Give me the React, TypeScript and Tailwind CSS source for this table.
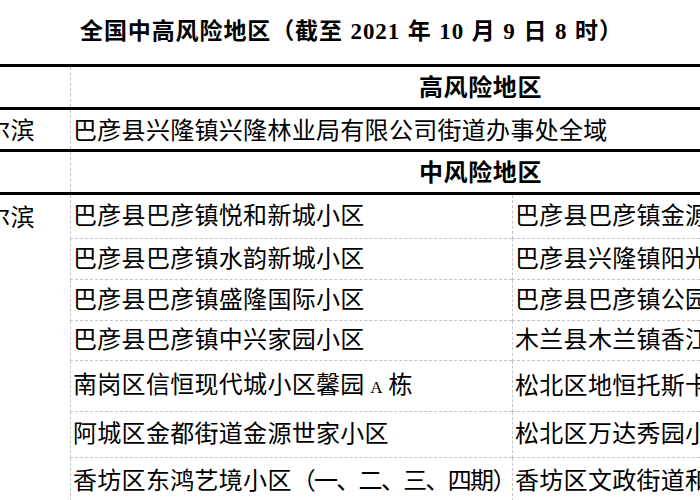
const cjk = "font-['Noto_Sans_CJK_SC',sans-serif]";

const rows = [
  { b: "巴彦县巴彦镇悦和新城小区", c: "巴彦县巴彦镇金源小区", h: "h-[44px]" },
  { b: "巴彦县巴彦镇水韵新城小区", c: "巴彦县兴隆镇阳光小区", h: "h-[41px]" },
  { b: "巴彦县巴彦镇盛隆国际小区", c: "巴彦县巴彦镇公园小区", h: "h-[41px]" },
  { b: "巴彦县巴彦镇中兴家园小区", c: "木兰县木兰镇香江小区", h: "h-[40px]" },
  { b: "南岗区信恒现代城小区馨园", tail: "栋", c: "松北区地恒托斯卡纳小区", h: "h-[51px]" },
  { b: "阿城区金都街道金源世家小区", c: "松北区万达秀园小区", h: "h-[46px]" },
  { b: "香坊区东鸿艺境小区", paren: "（一、二、三、四期）", c: "香坊区文政街道和平小区", h: "h-[48px]" },
];

export default function App() {
  return (
    <div className={`w-[700px] h-[500px] overflow-hidden bg-white text-black ${cjk}`}>
      <div className="ml-[-41px] w-[931px]">
        {/* title */}
        <div className="h-[64px] flex items-center pl-[121px] pb-[2px]">
          <h1 className="font-['Liberation_Serif','Noto_Sans_CJK_SC',serif] font-bold text-[23px] leading-none whitespace-nowrap tracking-[0.9px] [word-spacing:1px]">
            全国中高风险地区（截至 2021 年 10 月 9 日 8 时）
          </h1>
        </div>

        {/* high risk header */}
        <div className="border-t-[3px] border-black grid grid-cols-[111px_820px] h-[43px]">
          <div />
          <div className="border-l border-dashed border-[#c4c4c4] flex items-center justify-center pb-[2px]">
            <span className="font-bold text-[24px] leading-none tracking-[0.6px]">高风险地区</span>
          </div>
        </div>

        <div className="border-t-[3px] border-black grid grid-cols-[111px_820px] h-[42px] text-[24px] leading-none tracking-[0.3px]">
          <div className="flex items-center pl-[3px] pb-[2px]">哈尔滨</div>
          <div className="border-l border-dashed border-[#c4c4c4] flex items-center pl-[2px] pb-[2px] whitespace-nowrap">
            巴彦县兴隆镇兴隆林业局有限公司街道办事处全域
          </div>
        </div>

        {/* medium risk header */}
        <div className="border-t-[3px] border-black grid grid-cols-[111px_820px] h-[43px]">
          <div />
          <div className="border-l border-dashed border-[#c4c4c4] flex items-center justify-center pb-[2px]">
            <span className="font-bold text-[24px] leading-none tracking-[0.6px]">中风险地区</span>
          </div>
        </div>

        <div className="border-t-[3px] border-black flex text-[24px] leading-none tracking-[0.3px]">
          <div className="w-[111px] shrink-0 pl-[3px] pt-[9px]">哈尔滨</div>
          <div className="flex-1">
            {rows.map((r, i) => (
              <div key={i} className={`grid grid-cols-[442px_378px] ${r.h}`}>
                <div className="border-l border-b border-dashed border-[#c4c4c4] flex items-center pl-[2px] pb-[5px] whitespace-nowrap overflow-hidden">
                  <span>
                    {r.b}
                    {r.tail && (
                      <>
                        <span className="inline-block w-[24px] text-center text-[17px] font-['Liberation_Serif',serif]">A</span>
                        {r.tail}
                      </>
                    )}
                    {r.paren && <span className="tracking-[-1.7px]">{r.paren}</span>}
                  </span>
                </div>
                <div className="border-l border-b border-dashed border-[#c4c4c4] flex items-center pl-[2px] pb-[5px] whitespace-nowrap overflow-hidden">
                  {r.c}
                </div>
              </div>
            ))}
          </div>
        </div>
      </div>
    </div>
  );
}
